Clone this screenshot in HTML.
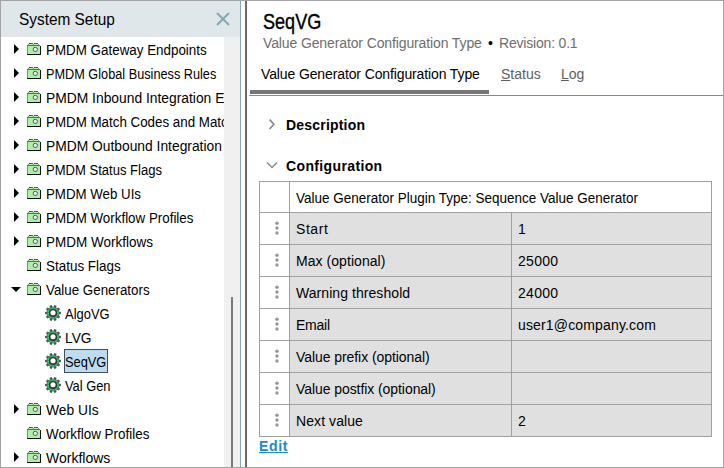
<!DOCTYPE html>
<html><head><meta charset="utf-8">
<style>
*{box-sizing:border-box;margin:0;padding:0}
html,body{width:724px;height:468px;overflow:hidden;background:#fff;font-family:"Liberation Sans",sans-serif;color:#000}
.abs{position:absolute}
#frame{position:absolute;left:0;top:0;width:724px;height:468px;border:1px solid #a3a3a3}
#hdr{left:1px;top:1px;width:239px;height:36px;background:#dfe7ea}
#hdrtxt{left:19px;top:10px;font-size:17px;white-space:nowrap;transform:scaleX(0.905);transform-origin:0 0;}
#sb{left:224px;top:37px;width:16px;height:430px;background:#f0f0f0}
#thumb{left:231px;top:297px;width:2px;height:170px;background:#7a7a7a}
#pl{left:240px;top:1px;width:1px;height:466px;background:#86aab6}
#dl{left:245px;top:1px;width:2px;height:466px;background:#6a6a6a}
#tree{left:1px;top:37px;width:223px;height:430px;overflow:hidden}
.row{position:absolute;left:0;width:223px;height:24px;white-space:nowrap;font-size:14px;line-height:24px}
.t{position:absolute}
.arr{position:absolute;width:0;height:0}
.arr.r{border-left:5px solid #000;border-top:5px solid transparent;border-bottom:5px solid transparent;left:13px;top:7px}
.arr.d{border-top:5px solid #000;border-left:5px solid transparent;border-right:5px solid transparent;left:10px;top:10px}
.fold{position:absolute;left:26px;top:6px}
.gear{position:absolute;left:44px;top:4px}
.selbox{position:absolute;left:63px;top:0;width:44px;height:24px;background:#bddcf0;border:1px solid #3c5258}
#title{left:263px;top:10px;font-size:21.5px;white-space:nowrap;-webkit-text-stroke:0.35px #000;transform:scaleX(0.84);transform-origin:0 0;}
.sub{left:263px;top:35px;font-size:14px;color:#6e6e6e;white-space:nowrap}
.tab{position:absolute;top:66px;font-size:14px;white-space:nowrap}
#tabbar{left:250px;top:90px;width:239px;height:4px;background:#767676}
#tabline{left:249px;top:95px;width:474px;height:1px;background:#8a8a8a}
.sec{position:absolute;font-weight:bold;font-size:14px;white-space:nowrap}
#tbl{position:absolute;left:259px;top:181px;width:453px;height:256px}
.hl{position:absolute;height:1px;background:#a0a0a0}
.vl{position:absolute;width:1px;background:#a0a0a0}
.cell{position:absolute;font-size:14px;white-space:nowrap;line-height:31px}
.dots{position:absolute;left:15px;top:-1px;width:6px;height:15px}
#edit{left:259px;top:438px;font-size:14px;font-weight:bold;color:#1a8ad2;text-decoration:underline;white-space:nowrap;letter-spacing:0.667px;}
</style></head><body>
<div id="frame"></div>
<div id="hdr" class="abs"></div>
<div id="hdrtxt" class="abs">System Setup</div>
<svg class="abs" style="left:216px;top:12px" width="14" height="14" viewBox="0 0 14 14"><path d="M1 1L13 13M13 1L1 13" stroke="#82aab4" stroke-width="2"/></svg>
<div id="sb" class="abs"></div>
<div id="thumb" class="abs"></div>
<div id="pl" class="abs"></div>
<div id="dl" class="abs"></div>
<div id="tree" class="abs">
<div class="row" style="top:0px"><div class="arr r"></div><svg class="fold" width="14" height="12" viewBox="0 0 14 12" shape-rendering="crispEdges"><rect x="2" y="0" width="4" height="1" fill="#505050"/><rect x="7" y="0" width="4" height="1" fill="#505050"/><rect x="2" y="1" width="4" height="1" fill="#c0f0b8"/><rect x="7" y="1" width="4" height="1" fill="#c0f0b8"/><rect x="1" y="1" width="1" height="1" fill="#a080b0"/><rect x="6" y="1" width="1" height="1" fill="#a080b0"/><rect x="11" y="1" width="1" height="1" fill="#a080b0"/><rect x="0" y="2" width="13" height="9" fill="#acf0a6"/><rect x="0" y="2" width="1" height="9" fill="#9a78a8"/><rect x="0" y="2" width="13" height="1" fill="#6a6472"/><rect x="13" y="3" width="1" height="9" fill="#101010"/><rect x="0" y="11" width="14" height="1" fill="#101010"/></svg><svg class="fold" width="14" height="12" viewBox="0 0 14 12"><circle cx="8.3" cy="6.4" r="2.1" fill="#e8fae8" stroke="#5a4868" stroke-width="1"/></svg><span class="t" style="left:45px;top:1px;transform:scaleX(0.956);transform-origin:0 0;">PMDM Gateway Endpoints</span></div>
<div class="row" style="top:24px"><div class="arr r"></div><svg class="fold" width="14" height="12" viewBox="0 0 14 12" shape-rendering="crispEdges"><rect x="2" y="0" width="4" height="1" fill="#505050"/><rect x="7" y="0" width="4" height="1" fill="#505050"/><rect x="2" y="1" width="4" height="1" fill="#c0f0b8"/><rect x="7" y="1" width="4" height="1" fill="#c0f0b8"/><rect x="1" y="1" width="1" height="1" fill="#a080b0"/><rect x="6" y="1" width="1" height="1" fill="#a080b0"/><rect x="11" y="1" width="1" height="1" fill="#a080b0"/><rect x="0" y="2" width="13" height="9" fill="#acf0a6"/><rect x="0" y="2" width="1" height="9" fill="#9a78a8"/><rect x="0" y="2" width="13" height="1" fill="#6a6472"/><rect x="13" y="3" width="1" height="9" fill="#101010"/><rect x="0" y="11" width="14" height="1" fill="#101010"/></svg><svg class="fold" width="14" height="12" viewBox="0 0 14 12"><circle cx="8.3" cy="6.4" r="2.1" fill="#e8fae8" stroke="#5a4868" stroke-width="1"/></svg><span class="t" style="left:45px;top:1px;transform:scaleX(0.9081);transform-origin:0 0;">PMDM Global Business Rules</span></div>
<div class="row" style="top:48px"><div class="arr r"></div><svg class="fold" width="14" height="12" viewBox="0 0 14 12" shape-rendering="crispEdges"><rect x="2" y="0" width="4" height="1" fill="#505050"/><rect x="7" y="0" width="4" height="1" fill="#505050"/><rect x="2" y="1" width="4" height="1" fill="#c0f0b8"/><rect x="7" y="1" width="4" height="1" fill="#c0f0b8"/><rect x="1" y="1" width="1" height="1" fill="#a080b0"/><rect x="6" y="1" width="1" height="1" fill="#a080b0"/><rect x="11" y="1" width="1" height="1" fill="#a080b0"/><rect x="0" y="2" width="13" height="9" fill="#acf0a6"/><rect x="0" y="2" width="1" height="9" fill="#9a78a8"/><rect x="0" y="2" width="13" height="1" fill="#6a6472"/><rect x="13" y="3" width="1" height="9" fill="#101010"/><rect x="0" y="11" width="14" height="1" fill="#101010"/></svg><svg class="fold" width="14" height="12" viewBox="0 0 14 12"><circle cx="8.3" cy="6.4" r="2.1" fill="#e8fae8" stroke="#5a4868" stroke-width="1"/></svg><span class="t" style="left:45px;top:1px;transform:scaleX(0.9879);transform-origin:0 0;">PMDM Inbound Integration Endpoints</span></div>
<div class="row" style="top:72px"><div class="arr r"></div><svg class="fold" width="14" height="12" viewBox="0 0 14 12" shape-rendering="crispEdges"><rect x="2" y="0" width="4" height="1" fill="#505050"/><rect x="7" y="0" width="4" height="1" fill="#505050"/><rect x="2" y="1" width="4" height="1" fill="#c0f0b8"/><rect x="7" y="1" width="4" height="1" fill="#c0f0b8"/><rect x="1" y="1" width="1" height="1" fill="#a080b0"/><rect x="6" y="1" width="1" height="1" fill="#a080b0"/><rect x="11" y="1" width="1" height="1" fill="#a080b0"/><rect x="0" y="2" width="13" height="9" fill="#acf0a6"/><rect x="0" y="2" width="1" height="9" fill="#9a78a8"/><rect x="0" y="2" width="13" height="1" fill="#6a6472"/><rect x="13" y="3" width="1" height="9" fill="#101010"/><rect x="0" y="11" width="14" height="1" fill="#101010"/></svg><svg class="fold" width="14" height="12" viewBox="0 0 14 12"><circle cx="8.3" cy="6.4" r="2.1" fill="#e8fae8" stroke="#5a4868" stroke-width="1"/></svg><span class="t" style="left:45px;top:1px;transform:scaleX(0.9532);transform-origin:0 0;">PMDM Match Codes and Matching Algorithms</span></div>
<div class="row" style="top:96px"><div class="arr r"></div><svg class="fold" width="14" height="12" viewBox="0 0 14 12" shape-rendering="crispEdges"><rect x="2" y="0" width="4" height="1" fill="#505050"/><rect x="7" y="0" width="4" height="1" fill="#505050"/><rect x="2" y="1" width="4" height="1" fill="#c0f0b8"/><rect x="7" y="1" width="4" height="1" fill="#c0f0b8"/><rect x="1" y="1" width="1" height="1" fill="#a080b0"/><rect x="6" y="1" width="1" height="1" fill="#a080b0"/><rect x="11" y="1" width="1" height="1" fill="#a080b0"/><rect x="0" y="2" width="13" height="9" fill="#acf0a6"/><rect x="0" y="2" width="1" height="9" fill="#9a78a8"/><rect x="0" y="2" width="13" height="1" fill="#6a6472"/><rect x="13" y="3" width="1" height="9" fill="#101010"/><rect x="0" y="11" width="14" height="1" fill="#101010"/></svg><svg class="fold" width="14" height="12" viewBox="0 0 14 12"><circle cx="8.3" cy="6.4" r="2.1" fill="#e8fae8" stroke="#5a4868" stroke-width="1"/></svg><span class="t" style="left:45px;top:1px;transform:scaleX(0.9869);transform-origin:0 0;">PMDM Outbound Integration Endpoints</span></div>
<div class="row" style="top:120px"><div class="arr r"></div><svg class="fold" width="14" height="12" viewBox="0 0 14 12" shape-rendering="crispEdges"><rect x="2" y="0" width="4" height="1" fill="#505050"/><rect x="7" y="0" width="4" height="1" fill="#505050"/><rect x="2" y="1" width="4" height="1" fill="#c0f0b8"/><rect x="7" y="1" width="4" height="1" fill="#c0f0b8"/><rect x="1" y="1" width="1" height="1" fill="#a080b0"/><rect x="6" y="1" width="1" height="1" fill="#a080b0"/><rect x="11" y="1" width="1" height="1" fill="#a080b0"/><rect x="0" y="2" width="13" height="9" fill="#acf0a6"/><rect x="0" y="2" width="1" height="9" fill="#9a78a8"/><rect x="0" y="2" width="13" height="1" fill="#6a6472"/><rect x="13" y="3" width="1" height="9" fill="#101010"/><rect x="0" y="11" width="14" height="1" fill="#101010"/></svg><svg class="fold" width="14" height="12" viewBox="0 0 14 12"><circle cx="8.3" cy="6.4" r="2.1" fill="#e8fae8" stroke="#5a4868" stroke-width="1"/></svg><span class="t" style="left:45px;top:1px;transform:scaleX(0.932);transform-origin:0 0;">PMDM Status Flags</span></div>
<div class="row" style="top:144px"><div class="arr r"></div><svg class="fold" width="14" height="12" viewBox="0 0 14 12" shape-rendering="crispEdges"><rect x="2" y="0" width="4" height="1" fill="#505050"/><rect x="7" y="0" width="4" height="1" fill="#505050"/><rect x="2" y="1" width="4" height="1" fill="#c0f0b8"/><rect x="7" y="1" width="4" height="1" fill="#c0f0b8"/><rect x="1" y="1" width="1" height="1" fill="#a080b0"/><rect x="6" y="1" width="1" height="1" fill="#a080b0"/><rect x="11" y="1" width="1" height="1" fill="#a080b0"/><rect x="0" y="2" width="13" height="9" fill="#acf0a6"/><rect x="0" y="2" width="1" height="9" fill="#9a78a8"/><rect x="0" y="2" width="13" height="1" fill="#6a6472"/><rect x="13" y="3" width="1" height="9" fill="#101010"/><rect x="0" y="11" width="14" height="1" fill="#101010"/></svg><svg class="fold" width="14" height="12" viewBox="0 0 14 12"><circle cx="8.3" cy="6.4" r="2.1" fill="#e8fae8" stroke="#5a4868" stroke-width="1"/></svg><span class="t" style="left:45px;top:1px;transform:scaleX(0.949);transform-origin:0 0;">PMDM Web UIs</span></div>
<div class="row" style="top:168px"><div class="arr r"></div><svg class="fold" width="14" height="12" viewBox="0 0 14 12" shape-rendering="crispEdges"><rect x="2" y="0" width="4" height="1" fill="#505050"/><rect x="7" y="0" width="4" height="1" fill="#505050"/><rect x="2" y="1" width="4" height="1" fill="#c0f0b8"/><rect x="7" y="1" width="4" height="1" fill="#c0f0b8"/><rect x="1" y="1" width="1" height="1" fill="#a080b0"/><rect x="6" y="1" width="1" height="1" fill="#a080b0"/><rect x="11" y="1" width="1" height="1" fill="#a080b0"/><rect x="0" y="2" width="13" height="9" fill="#acf0a6"/><rect x="0" y="2" width="1" height="9" fill="#9a78a8"/><rect x="0" y="2" width="13" height="1" fill="#6a6472"/><rect x="13" y="3" width="1" height="9" fill="#101010"/><rect x="0" y="11" width="14" height="1" fill="#101010"/></svg><svg class="fold" width="14" height="12" viewBox="0 0 14 12"><circle cx="8.3" cy="6.4" r="2.1" fill="#e8fae8" stroke="#5a4868" stroke-width="1"/></svg><span class="t" style="left:45px;top:1px;transform:scaleX(0.9539);transform-origin:0 0;">PMDM Workflow Profiles</span></div>
<div class="row" style="top:192px"><div class="arr r"></div><svg class="fold" width="14" height="12" viewBox="0 0 14 12" shape-rendering="crispEdges"><rect x="2" y="0" width="4" height="1" fill="#505050"/><rect x="7" y="0" width="4" height="1" fill="#505050"/><rect x="2" y="1" width="4" height="1" fill="#c0f0b8"/><rect x="7" y="1" width="4" height="1" fill="#c0f0b8"/><rect x="1" y="1" width="1" height="1" fill="#a080b0"/><rect x="6" y="1" width="1" height="1" fill="#a080b0"/><rect x="11" y="1" width="1" height="1" fill="#a080b0"/><rect x="0" y="2" width="13" height="9" fill="#acf0a6"/><rect x="0" y="2" width="1" height="9" fill="#9a78a8"/><rect x="0" y="2" width="13" height="1" fill="#6a6472"/><rect x="13" y="3" width="1" height="9" fill="#101010"/><rect x="0" y="11" width="14" height="1" fill="#101010"/></svg><svg class="fold" width="14" height="12" viewBox="0 0 14 12"><circle cx="8.3" cy="6.4" r="2.1" fill="#e8fae8" stroke="#5a4868" stroke-width="1"/></svg><span class="t" style="left:45px;top:1px;transform:scaleX(0.9633);transform-origin:0 0;">PMDM Workflows</span></div>
<div class="row" style="top:216px"><svg class="fold" width="14" height="12" viewBox="0 0 14 12" shape-rendering="crispEdges"><rect x="2" y="0" width="4" height="1" fill="#505050"/><rect x="7" y="0" width="4" height="1" fill="#505050"/><rect x="2" y="1" width="4" height="1" fill="#c0f0b8"/><rect x="7" y="1" width="4" height="1" fill="#c0f0b8"/><rect x="1" y="1" width="1" height="1" fill="#a080b0"/><rect x="6" y="1" width="1" height="1" fill="#a080b0"/><rect x="11" y="1" width="1" height="1" fill="#a080b0"/><rect x="0" y="2" width="13" height="9" fill="#acf0a6"/><rect x="0" y="2" width="1" height="9" fill="#9a78a8"/><rect x="0" y="2" width="13" height="1" fill="#6a6472"/><rect x="13" y="3" width="1" height="9" fill="#101010"/><rect x="0" y="11" width="14" height="1" fill="#101010"/></svg><svg class="fold" width="14" height="12" viewBox="0 0 14 12"><circle cx="8.3" cy="6.4" r="2.1" fill="#e8fae8" stroke="#5a4868" stroke-width="1"/></svg><span class="t" style="left:45px;top:1px;transform:scaleX(0.96);transform-origin:0 0;">Status Flags</span></div>
<div class="row" style="top:240px"><div class="arr d"></div><svg class="fold" width="14" height="12" viewBox="0 0 14 12" shape-rendering="crispEdges"><rect x="2" y="0" width="4" height="1" fill="#505050"/><rect x="7" y="0" width="4" height="1" fill="#505050"/><rect x="2" y="1" width="4" height="1" fill="#c0f0b8"/><rect x="7" y="1" width="4" height="1" fill="#c0f0b8"/><rect x="1" y="1" width="1" height="1" fill="#a080b0"/><rect x="6" y="1" width="1" height="1" fill="#a080b0"/><rect x="11" y="1" width="1" height="1" fill="#a080b0"/><rect x="0" y="2" width="13" height="9" fill="#acf0a6"/><rect x="0" y="2" width="1" height="9" fill="#9a78a8"/><rect x="0" y="2" width="13" height="1" fill="#6a6472"/><rect x="13" y="3" width="1" height="9" fill="#101010"/><rect x="0" y="11" width="14" height="1" fill="#101010"/></svg><svg class="fold" width="14" height="12" viewBox="0 0 14 12"><circle cx="8.3" cy="6.4" r="2.1" fill="#e8fae8" stroke="#5a4868" stroke-width="1"/></svg><span class="t" style="left:45px;top:1px;transform:scaleX(0.9533);transform-origin:0 0;">Value Generators</span></div>
<div class="row" style="top:264px"><svg class="gear" width="16" height="16" viewBox="0 0 16 16"><polygon points="8.54,1.82 9.39,0.12 11.51,0.81 11.19,2.69 12.07,3.32 13.75,2.44 15.06,4.24 13.71,5.58 14.04,6.61 15.92,6.89 15.92,9.11 14.04,9.39 13.71,10.42 15.06,11.76 13.75,13.56 12.07,12.68 11.19,13.31 11.51,15.19 9.39,15.88 8.54,14.18 7.46,14.18 6.61,15.88 4.49,15.19 4.81,13.31 3.93,12.68 2.25,13.56 0.94,11.76 2.29,10.42 1.96,9.39 0.08,9.11 0.08,6.89 1.96,6.61 2.29,5.58 0.94,4.24 2.25,2.44 3.93,3.32 4.81,2.69 4.49,0.81 6.61,0.12 7.46,1.82" fill="#555"/><circle cx="8" cy="8" r="5.9" fill="#555"/><circle cx="8" cy="8" r="5.0" fill="none" stroke="#22d064" stroke-width="1.7" stroke-dasharray="2.6 0.55"/><circle cx="8" cy="8" r="3.4" fill="none" stroke="#333" stroke-width="1.3"/><circle cx="8" cy="7.8" r="2.5" fill="#fff"/></svg><span class="t" style="left:64px;top:1px;transform:scaleX(0.9239);transform-origin:0 0;">AlgoVG</span></div>
<div class="row" style="top:288px"><svg class="gear" width="16" height="16" viewBox="0 0 16 16"><polygon points="8.54,1.82 9.39,0.12 11.51,0.81 11.19,2.69 12.07,3.32 13.75,2.44 15.06,4.24 13.71,5.58 14.04,6.61 15.92,6.89 15.92,9.11 14.04,9.39 13.71,10.42 15.06,11.76 13.75,13.56 12.07,12.68 11.19,13.31 11.51,15.19 9.39,15.88 8.54,14.18 7.46,14.18 6.61,15.88 4.49,15.19 4.81,13.31 3.93,12.68 2.25,13.56 0.94,11.76 2.29,10.42 1.96,9.39 0.08,9.11 0.08,6.89 1.96,6.61 2.29,5.58 0.94,4.24 2.25,2.44 3.93,3.32 4.81,2.69 4.49,0.81 6.61,0.12 7.46,1.82" fill="#555"/><circle cx="8" cy="8" r="5.9" fill="#555"/><circle cx="8" cy="8" r="5.0" fill="none" stroke="#22d064" stroke-width="1.7" stroke-dasharray="2.6 0.55"/><circle cx="8" cy="8" r="3.4" fill="none" stroke="#333" stroke-width="1.3"/><circle cx="8" cy="7.8" r="2.5" fill="#fff"/></svg><span class="t" style="left:64px;top:1px;transform:scaleX(0.9833);transform-origin:0 0;">LVG</span></div>
<div class="row" style="top:312px"><svg class="gear" width="16" height="16" viewBox="0 0 16 16"><polygon points="8.54,1.82 9.39,0.12 11.51,0.81 11.19,2.69 12.07,3.32 13.75,2.44 15.06,4.24 13.71,5.58 14.04,6.61 15.92,6.89 15.92,9.11 14.04,9.39 13.71,10.42 15.06,11.76 13.75,13.56 12.07,12.68 11.19,13.31 11.51,15.19 9.39,15.88 8.54,14.18 7.46,14.18 6.61,15.88 4.49,15.19 4.81,13.31 3.93,12.68 2.25,13.56 0.94,11.76 2.29,10.42 1.96,9.39 0.08,9.11 0.08,6.89 1.96,6.61 2.29,5.58 0.94,4.24 2.25,2.44 3.93,3.32 4.81,2.69 4.49,0.81 6.61,0.12 7.46,1.82" fill="#555"/><circle cx="8" cy="8" r="5.9" fill="#555"/><circle cx="8" cy="8" r="5.0" fill="none" stroke="#22d064" stroke-width="1.7" stroke-dasharray="2.6 0.55"/><circle cx="8" cy="8" r="3.4" fill="none" stroke="#333" stroke-width="1.3"/><circle cx="8" cy="7.8" r="2.5" fill="#fff"/></svg><div class="selbox"></div><span class="t" style="left:64px;top:1px;transform:scaleX(0.9143);transform-origin:0 0;">SeqVG</span></div>
<div class="row" style="top:336px"><svg class="gear" width="16" height="16" viewBox="0 0 16 16"><polygon points="8.54,1.82 9.39,0.12 11.51,0.81 11.19,2.69 12.07,3.32 13.75,2.44 15.06,4.24 13.71,5.58 14.04,6.61 15.92,6.89 15.92,9.11 14.04,9.39 13.71,10.42 15.06,11.76 13.75,13.56 12.07,12.68 11.19,13.31 11.51,15.19 9.39,15.88 8.54,14.18 7.46,14.18 6.61,15.88 4.49,15.19 4.81,13.31 3.93,12.68 2.25,13.56 0.94,11.76 2.29,10.42 1.96,9.39 0.08,9.11 0.08,6.89 1.96,6.61 2.29,5.58 0.94,4.24 2.25,2.44 3.93,3.32 4.81,2.69 4.49,0.81 6.61,0.12 7.46,1.82" fill="#555"/><circle cx="8" cy="8" r="5.9" fill="#555"/><circle cx="8" cy="8" r="5.0" fill="none" stroke="#22d064" stroke-width="1.7" stroke-dasharray="2.6 0.55"/><circle cx="8" cy="8" r="3.4" fill="none" stroke="#333" stroke-width="1.3"/><circle cx="8" cy="7.8" r="2.5" fill="#fff"/></svg><span class="t" style="left:64px;top:1px;transform:scaleX(0.9188);transform-origin:0 0;">Val Gen</span></div>
<div class="row" style="top:360px"><div class="arr r"></div><svg class="fold" width="14" height="12" viewBox="0 0 14 12" shape-rendering="crispEdges"><rect x="2" y="0" width="4" height="1" fill="#505050"/><rect x="7" y="0" width="4" height="1" fill="#505050"/><rect x="2" y="1" width="4" height="1" fill="#c0f0b8"/><rect x="7" y="1" width="4" height="1" fill="#c0f0b8"/><rect x="1" y="1" width="1" height="1" fill="#a080b0"/><rect x="6" y="1" width="1" height="1" fill="#a080b0"/><rect x="11" y="1" width="1" height="1" fill="#a080b0"/><rect x="0" y="2" width="13" height="9" fill="#acf0a6"/><rect x="0" y="2" width="1" height="9" fill="#9a78a8"/><rect x="0" y="2" width="13" height="1" fill="#6a6472"/><rect x="13" y="3" width="1" height="9" fill="#101010"/><rect x="0" y="11" width="14" height="1" fill="#101010"/></svg><svg class="fold" width="14" height="12" viewBox="0 0 14 12"><circle cx="8.3" cy="6.4" r="2.1" fill="#e8fae8" stroke="#5a4868" stroke-width="1"/></svg><span class="t" style="left:45px;top:1px;transform:scaleX(0.9865);transform-origin:0 0;">Web UIs</span></div>
<div class="row" style="top:384px"><svg class="fold" width="14" height="12" viewBox="0 0 14 12" shape-rendering="crispEdges"><rect x="2" y="0" width="4" height="1" fill="#505050"/><rect x="7" y="0" width="4" height="1" fill="#505050"/><rect x="2" y="1" width="4" height="1" fill="#c0f0b8"/><rect x="7" y="1" width="4" height="1" fill="#c0f0b8"/><rect x="1" y="1" width="1" height="1" fill="#a080b0"/><rect x="6" y="1" width="1" height="1" fill="#a080b0"/><rect x="11" y="1" width="1" height="1" fill="#a080b0"/><rect x="0" y="2" width="13" height="9" fill="#acf0a6"/><rect x="0" y="2" width="1" height="9" fill="#9a78a8"/><rect x="0" y="2" width="13" height="1" fill="#6a6472"/><rect x="13" y="3" width="1" height="9" fill="#101010"/><rect x="0" y="11" width="14" height="1" fill="#101010"/></svg><svg class="fold" width="14" height="12" viewBox="0 0 14 12"><circle cx="8.3" cy="6.4" r="2.1" fill="#e8fae8" stroke="#5a4868" stroke-width="1"/></svg><span class="t" style="left:45px;top:1px;transform:scaleX(0.9579);transform-origin:0 0;">Workflow Profiles</span></div>
<div class="row" style="top:408px"><div class="arr r"></div><svg class="fold" width="14" height="12" viewBox="0 0 14 12" shape-rendering="crispEdges"><rect x="2" y="0" width="4" height="1" fill="#505050"/><rect x="7" y="0" width="4" height="1" fill="#505050"/><rect x="2" y="1" width="4" height="1" fill="#c0f0b8"/><rect x="7" y="1" width="4" height="1" fill="#c0f0b8"/><rect x="1" y="1" width="1" height="1" fill="#a080b0"/><rect x="6" y="1" width="1" height="1" fill="#a080b0"/><rect x="11" y="1" width="1" height="1" fill="#a080b0"/><rect x="0" y="2" width="13" height="9" fill="#acf0a6"/><rect x="0" y="2" width="1" height="9" fill="#9a78a8"/><rect x="0" y="2" width="13" height="1" fill="#6a6472"/><rect x="13" y="3" width="1" height="9" fill="#101010"/><rect x="0" y="11" width="14" height="1" fill="#101010"/></svg><svg class="fold" width="14" height="12" viewBox="0 0 14 12"><circle cx="8.3" cy="6.4" r="2.1" fill="#e8fae8" stroke="#5a4868" stroke-width="1"/></svg><span class="t" style="left:45px;top:1px;transform:scaleX(1.0);transform-origin:0 0;">Workflows</span></div>
</div>
<div id="title" class="abs">SeqVG</div>
<div class="sub abs" style="letter-spacing:-0.121px;">Value Generator Configuration Type</div>
<div class="sub abs" style="left:488px;color:#000">•</div>
<div class="sub abs" style="left:499px;letter-spacing:-0.192px;">Revision: 0.1</div>
<div class="tab" style="left:261px;letter-spacing:-0.121px;">Value Generator Configuration Type</div>
<div class="tab" style="left:501px;color:#5e5e5e"><u>S</u>tatus</div>
<div class="tab" style="left:561px;color:#5e5e5e"><u>L</u>og</div>
<div id="tabbar" class="abs"></div>
<div id="tabline" class="abs"></div>
<svg class="abs" style="left:268px;top:118px" width="10" height="13" viewBox="0 0 10 13"><path d="M1.6 1.6L5.9 6.3L1.6 11" stroke="#8a8a8a" stroke-width="1.7" fill="none"/></svg>
<div class="sec" style="left:286px;top:117px;letter-spacing:0.2px;">Description</div>
<svg class="abs" style="left:266px;top:161px" width="12" height="8" viewBox="0 0 12 8"><path d="M1 1.5L6 6.5L11 1.5" stroke="#8a8a8a" stroke-width="1.5" fill="none"/></svg>
<div class="sec" style="left:286px;top:158px;letter-spacing:0.367px;">Configuration</div>
<div id="tbl">
<div class="abs" style="left:31px;top:32px;width:421px;height:223px;background:#e0e0e0"></div>
<div class="hl" style="left:0;top:0px;width:453px"></div>
<div class="hl" style="left:0;top:31px;width:453px"></div>
<div class="hl" style="left:0;top:63px;width:453px"></div>
<div class="hl" style="left:0;top:95px;width:453px"></div>
<div class="hl" style="left:0;top:127px;width:453px"></div>
<div class="hl" style="left:0;top:159px;width:453px"></div>
<div class="hl" style="left:0;top:191px;width:453px"></div>
<div class="hl" style="left:0;top:223px;width:453px"></div>
<div class="hl" style="left:0;top:255px;width:453px"></div>
<div class="vl" style="left:0;top:0;height:256px"></div>
<div class="vl" style="left:452px;top:0;height:256px"></div>
<div class="vl" style="left:30px;top:0;height:256px"></div>
<div class="vl" style="left:252px;top:31px;height:225px"></div>
<div class="cell" style="left:37px;top:2px;transform:scaleX(0.9633);transform-origin:0 0;">Value Generator Plugin Type: Sequence Value Generator</div>
<div class="abs" style="left:0;top:41px;width:30px;height:13px"><svg class="dots" viewBox="0 0 6 15" width="6" height="15"><circle cx="3" cy="2.2" r="1.75" fill="#999"/><circle cx="3" cy="7.1" r="1.75" fill="#999"/><circle cx="3" cy="12.0" r="1.75" fill="#999"/></svg></div>
<div class="cell" style="left:37px;top:33px;letter-spacing:0.55px;">Start</div>
<div class="cell" style="left:259px;top:33px;letter-spacing:0px;">1</div>
<div class="abs" style="left:0;top:73px;width:30px;height:13px"><svg class="dots" viewBox="0 0 6 15" width="6" height="15"><circle cx="3" cy="2.2" r="1.75" fill="#999"/><circle cx="3" cy="7.1" r="1.75" fill="#999"/><circle cx="3" cy="12.0" r="1.75" fill="#999"/></svg></div>
<div class="cell" style="left:37px;top:65px;letter-spacing:0.054px;">Max (optional)</div>
<div class="cell" style="left:259px;top:65px;letter-spacing:0.3px;">25000</div>
<div class="abs" style="left:0;top:105px;width:30px;height:13px"><svg class="dots" viewBox="0 0 6 15" width="6" height="15"><circle cx="3" cy="2.2" r="1.75" fill="#999"/><circle cx="3" cy="7.1" r="1.75" fill="#999"/><circle cx="3" cy="12.0" r="1.75" fill="#999"/></svg></div>
<div class="cell" style="left:37px;top:97px;letter-spacing:0.062px;">Warning threshold</div>
<div class="cell" style="left:259px;top:97px;letter-spacing:0.3px;">24000</div>
<div class="abs" style="left:0;top:137px;width:30px;height:13px"><svg class="dots" viewBox="0 0 6 15" width="6" height="15"><circle cx="3" cy="2.2" r="1.75" fill="#999"/><circle cx="3" cy="7.1" r="1.75" fill="#999"/><circle cx="3" cy="12.0" r="1.75" fill="#999"/></svg></div>
<div class="cell" style="left:37px;top:129px;letter-spacing:-0.25px;">Email</div>
<div class="cell" style="left:259px;top:129px;letter-spacing:0.156px;">user1@company.com</div>
<div class="abs" style="left:0;top:169px;width:30px;height:13px"><svg class="dots" viewBox="0 0 6 15" width="6" height="15"><circle cx="3" cy="2.2" r="1.75" fill="#999"/><circle cx="3" cy="7.1" r="1.75" fill="#999"/><circle cx="3" cy="12.0" r="1.75" fill="#999"/></svg></div>
<div class="cell" style="left:37px;top:161px;letter-spacing:-0.068px;">Value prefix (optional)</div>
<div class="abs" style="left:0;top:201px;width:30px;height:13px"><svg class="dots" viewBox="0 0 6 15" width="6" height="15"><circle cx="3" cy="2.2" r="1.75" fill="#999"/><circle cx="3" cy="7.1" r="1.75" fill="#999"/><circle cx="3" cy="12.0" r="1.75" fill="#999"/></svg></div>
<div class="cell" style="left:37px;top:193px;letter-spacing:-0.07px;">Value postfix (optional)</div>
<div class="abs" style="left:0;top:233px;width:30px;height:13px"><svg class="dots" viewBox="0 0 6 15" width="6" height="15"><circle cx="3" cy="2.2" r="1.75" fill="#999"/><circle cx="3" cy="7.1" r="1.75" fill="#999"/><circle cx="3" cy="12.0" r="1.75" fill="#999"/></svg></div>
<div class="cell" style="left:37px;top:225px;letter-spacing:0.078px;">Next value</div>
<div class="cell" style="left:259px;top:225px;letter-spacing:0px;">2</div>
</div>
<div id="edit" class="abs">Edit</div>
</body></html>
